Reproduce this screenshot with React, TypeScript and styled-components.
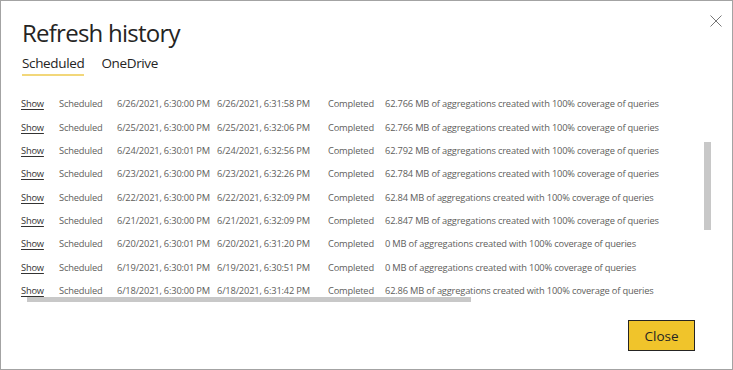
import React from "react";
import styled, { createGlobalStyle } from "styled-components";

interface RefreshItem {
  type: string;
  start: string;
  end: string;
  status: string;
  details: string;
}

const items: RefreshItem[] = [
  { type: "Scheduled", start: "6/26/2021, 6:30:00 PM", end: "6/26/2021, 6:31:58 PM", status: "Completed", details: "62.766 MB of aggregations created with 100% coverage of queries" },
  { type: "Scheduled", start: "6/25/2021, 6:30:00 PM", end: "6/25/2021, 6:32:06 PM", status: "Completed", details: "62.766 MB of aggregations created with 100% coverage of queries" },
  { type: "Scheduled", start: "6/24/2021, 6:30:01 PM", end: "6/24/2021, 6:32:56 PM", status: "Completed", details: "62.792 MB of aggregations created with 100% coverage of queries" },
  { type: "Scheduled", start: "6/23/2021, 6:30:00 PM", end: "6/23/2021, 6:32:26 PM", status: "Completed", details: "62.784 MB of aggregations created with 100% coverage of queries" },
  { type: "Scheduled", start: "6/22/2021, 6:30:00 PM", end: "6/22/2021, 6:32:09 PM", status: "Completed", details: "62.84 MB of aggregations created with 100% coverage of queries" },
  { type: "Scheduled", start: "6/21/2021, 6:30:00 PM", end: "6/21/2021, 6:32:09 PM", status: "Completed", details: "62.847 MB of aggregations created with 100% coverage of queries" },
  { type: "Scheduled", start: "6/20/2021, 6:30:01 PM", end: "6/20/2021, 6:31:20 PM", status: "Completed", details: "0 MB of aggregations created with 100% coverage of queries" },
  { type: "Scheduled", start: "6/19/2021, 6:30:01 PM", end: "6/19/2021, 6:30:51 PM", status: "Completed", details: "0 MB of aggregations created with 100% coverage of queries" },
  { type: "Scheduled", start: "6/18/2021, 6:30:00 PM", end: "6/18/2021, 6:31:42 PM", status: "Completed", details: "62.86 MB of aggregations created with 100% coverage of queries" },
];

const App: React.FC = () => {
  return (
    <>
      <GlobalStyle />
      <Dialog>
        <CloseIcon aria-label="Close">
          <svg width="12" height="12" viewBox="0 0 12 12">
            <path d="M0.5 0.5 L11.5 11.5 M11.5 0.5 L0.5 11.5" stroke="#777" strokeWidth="1" />
          </svg>
        </CloseIcon>
        <Title>Refresh history</Title>
        <Tabs>
          <Tab active>Scheduled</Tab>
          <Tab>OneDrive</Tab>
        </Tabs>
        <ListFrame>
          <List>
            {items.map((item, i) => (
              <Row key={i}>
                <ShowLink>Show</ShowLink>
                <Cell width={58}>{item.type}</Cell>
                <Cell width={100}>{item.start}</Cell>
                <Cell width={111}>{item.end}</Cell>
                <Cell width={57}>{item.status}</Cell>
                <Cell>{item.details}</Cell>
              </Row>
            ))}
          </List>
          <VThumb />
          <HThumb />
        </ListFrame>
        <Footer>
          <CloseButton>Close</CloseButton>
        </Footer>
      </Dialog>
    </>
  );
};
export default App;

const GlobalStyle = createGlobalStyle`
  html, body {
    margin: 0;
    padding: 0;
    background: #ffffff;
  }
  body {
    font-family: "Open Sans", "Noto Sans", "Liberation Sans", sans-serif;
  }
`;

const Dialog = styled.div`
  position: relative;
  box-sizing: border-box;
  width: 733px;
  height: 370px;
  border: 1px solid #a3a3a3;
  background: #ffffff;
  display: flex;
  flex-direction: column;
`;

const CloseIcon = styled.div`
  position: absolute;
  top: 14px;
  right: 10px;
  width: 12px;
  height: 12px;
  display: flex;
`;

const Title = styled.h1`
  margin: 15px 0 0 21px;
  font-size: 24px;
  font-weight: 400;
  line-height: 33px;
  color: #252423;
  letter-spacing: -0.75px;
`;

const Tabs = styled.div`
  display: flex;
  gap: 17px;
  margin: 5px 0 0 21px;
`;

const Tab = styled.div<{ active?: boolean }>`
  font-size: 13.5px;
  line-height: 19px;
  letter-spacing: -0.35px;
  color: #252423;
  padding-bottom: 1px;
  border-bottom: 2px solid ${({ active }) => (active ? "#f2d77a" : "transparent")};
`;

const ListFrame = styled.div`
  position: relative;
  height: 210px;
  margin-top: 16px;
  overflow: hidden;
`;

const List = styled.div`
  padding-left: 20px;
  display: flex;
  flex-direction: column;
`;

const Row = styled.div`
  display: flex;
  align-items: center;
  height: 23.375px;
  font-size: 9.3px;
  letter-spacing: -0.18px;
  color: #605e5c;
  white-space: nowrap;
`;

const ShowLink = styled.span`
  width: 38px;
  flex: none;
  color: #333333;
  text-decoration: underline;
  text-underline-offset: 2px;
`;

const Cell = styled.span<{ width?: number }>`
  flex: none;
  width: ${({ width }) => (width ? `${width}px` : "auto")};
`;

const VThumb = styled.div`
  position: absolute;
  right: 21px;
  top: 50px;
  width: 7px;
  height: 88px;
  background: #c8c8c8;
`;

const HThumb = styled.div`
  position: absolute;
  left: 26px;
  bottom: 0px;
  width: 444px;
  height: 5px;
  background: #c8c8c8;
`;

const Footer = styled.div`
  display: flex;
  justify-content: flex-end;
  padding: 18px 37px 0 0;
`;

const CloseButton = styled.button`
  box-sizing: border-box;
  width: 67px;
  height: 31px;
  background: #f0c42b;
  border: 1px solid #252423;
  font-family: "Open Sans", "Noto Sans", sans-serif;
  font-size: 13.5px;
  color: #252423;
  padding: 0;
`;
